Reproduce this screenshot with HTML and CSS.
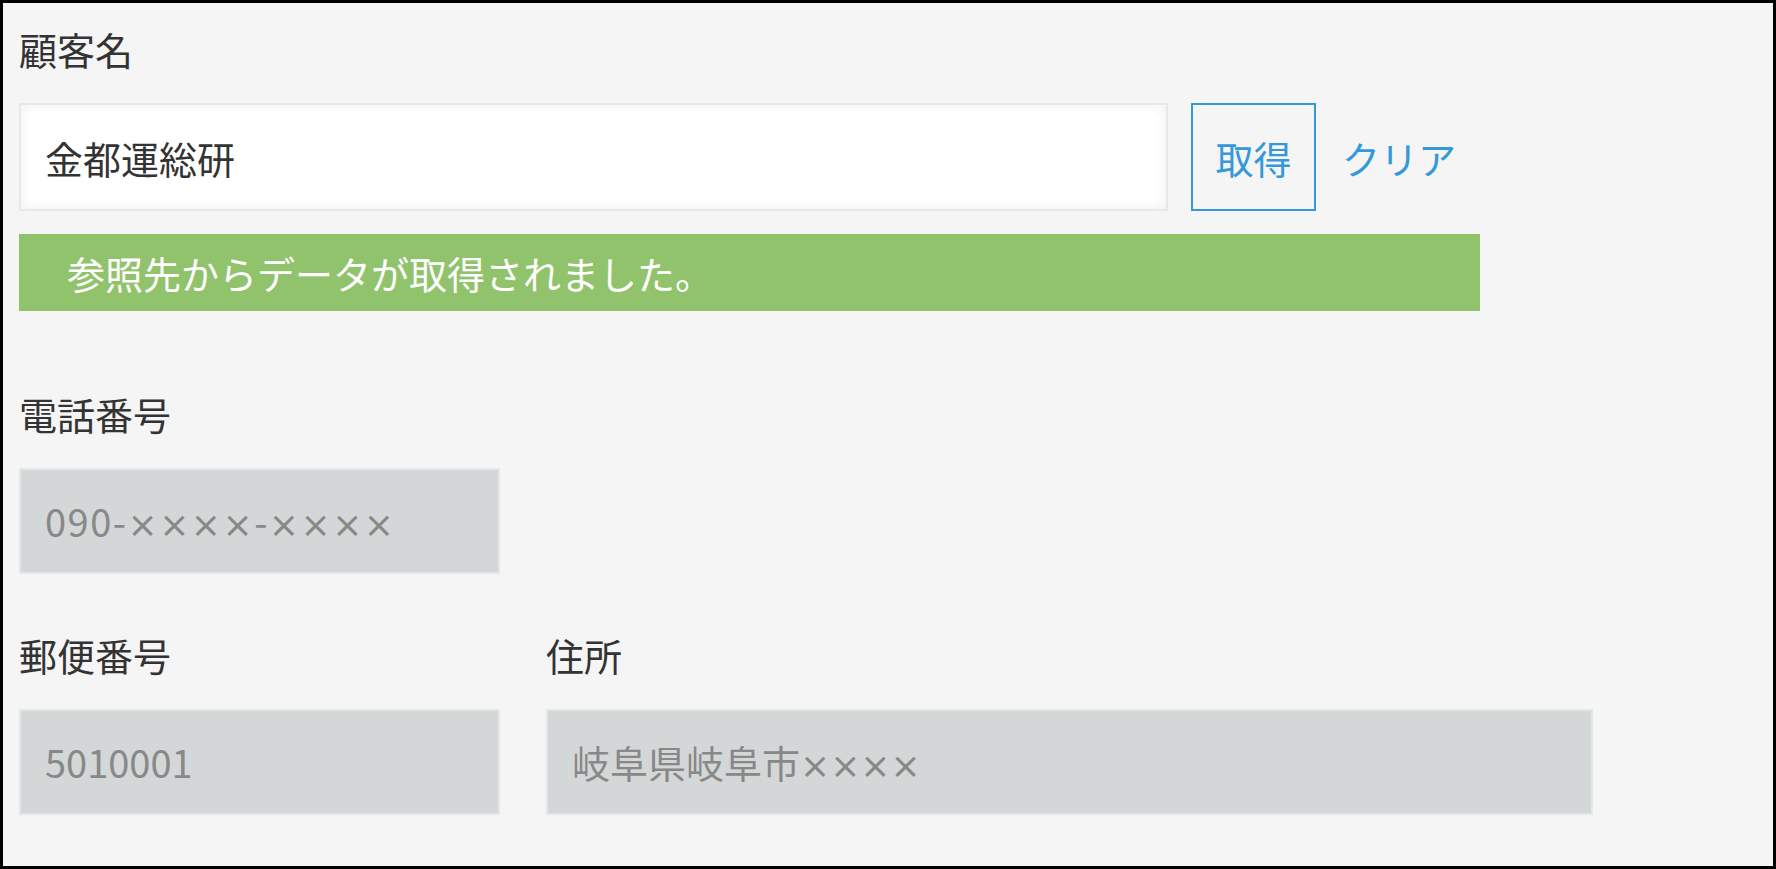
FILE: index.html
```html
<!DOCTYPE html>
<html lang="ja">
<head>
    <meta charset="UTF-8">
    <meta name="viewport" content="width=device-width, initial-scale=1.0">
    <title>顧客情報</title>
    <link rel="stylesheet" href="styles.css">
</head>
<body>
    <div class="frame">
        <div class="field">
            <label class="label" for="customer">顧客名</label>
            <div class="lookup-row">
                <input type="text" id="customer" class="text-input" value="金都運総研">
                <button type="button" class="btn-get">取得</button>
                <a href="#" class="link-clear">クリア</a>
            </div>
            <div class="notice">参照先からデータが取得されました。</div>
        </div>

        <div class="field field-phone">
            <div class="label">電話番号</div>
            <div class="readonly box-short phone">090-<span class="mask">××××</span>-<span class="mask">××××</span></div>
        </div>

        <div class="field-row">
            <div class="field">
                <div class="label">郵便番号</div>
                <div class="readonly box-short">5010001</div>
            </div>
            <div class="field">
                <div class="label">住所</div>
                <div class="readonly box-long">岐阜県岐阜市<span class="mask">××××</span></div>
            </div>
        </div>
    </div>
</body>
</html>
```

FILE: styles.css
```css
html, body {
    margin: 0;
    padding: 0;
}

body {
    font-family: "Noto Sans CJK JP", "Noto Sans", sans-serif;
    color: #333;
}

.frame {
    box-sizing: border-box;
    height: 100vh;
    border: 3px solid #000;
    background-color: #f5f5f5;
    padding: 22px 16px 0 16px;
}

.label {
    display: block;
    font-size: 38px;
    line-height: 48px;
    margin-bottom: 30px;
}

.lookup-row {
    display: flex;
    align-items: center;
}

.text-input {
    box-sizing: border-box;
    width: 1149px;
    height: 108px;
    padding: 0 24px;
    border: 2px solid #e6e9ea;
    background-color: #fff;
    box-shadow: 1px 1px 12px #f5f5f5 inset, -1px -1px 12px #f5f5f5 inset;
    font-family: inherit;
    font-size: 38px;
    color: #333;
    outline: none;
}

.btn-get {
    box-sizing: border-box;
    width: 125px;
    height: 108px;
    margin-left: 23px;
    padding: 0;
    border: 2px solid #3498db;
    background: transparent;
    color: #3498db;
    font-family: inherit;
    font-size: 38px;
    cursor: pointer;
}

.link-clear {
    margin-left: 26px;
    color: #3498db;
    font-size: 38px;
    text-decoration: none;
}

.notice {
    box-sizing: border-box;
    width: 1461px;
    height: 77px;
    margin-top: 23px;
    padding-left: 48px;
    background-color: #91c36c;
    color: #fff;
    font-size: 38px;
    line-height: 77px;
}

.field-phone {
    margin-top: 79px;
}

.field-row {
    display: flex;
    gap: 46px;
    margin-top: 57px;
}

.readonly {
    box-sizing: border-box;
    height: 106px;
    padding: 0 24px;
    border: 2px solid #e3e7e8;
    background-color: #d4d7d7;
    color: #888;
    font-size: 38px;
    line-height: 102px;
}

.phone {
    letter-spacing: 1.5px;
}

.mask {
    font-family: "DejaVu Sans", sans-serif;
    font-size: 36px;
}

.box-short {
    width: 481px;
}

.box-long {
    width: 1047px;
}
```
